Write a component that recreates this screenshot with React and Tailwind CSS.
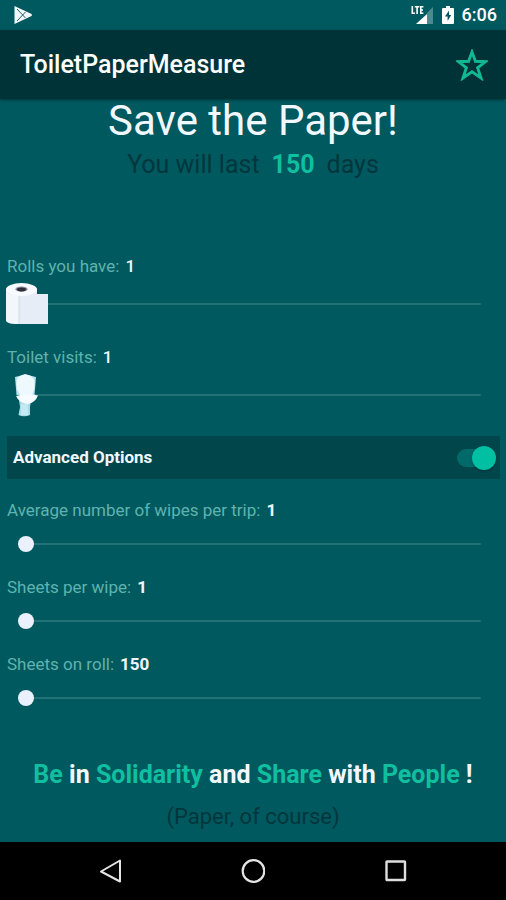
import { useState } from "react";

function PlayStoreIcon() {
  return (
    <svg viewBox="0 0 20 20" className="h-5 w-5" aria-hidden="true">
      <path d="M1.5 1 L18.5 9 Q19.5 10 18.5 11 L1.5 19 Z" fill="#f2f8f9" />
      <path d="M4 4 L12.5 13 M4 16 L12.5 7" stroke="#0b4f55" strokeWidth="0.9" fill="none" />
    </svg>
  );
}

function SignalIcon() {
  return (
    <svg viewBox="0 0 23 20" className="h-5 w-[23px]" aria-hidden="true">
      <path d="M22 2 V19 H16 V8 Z" fill="#4b8b90" />
      <path d="M16 9 V19 H5 Z" fill="#ffffff" />
      <g stroke="#ffffff" strokeWidth="1.6" fill="none">
        <path d="M1.3 1 V8.2 H4" />
        <path d="M3.8 1.8 H8.4 M6.1 1.8 V9" />
        <path d="M12.4 1.8 H9.8 V8.2 H12.4 M9.8 5 H12" />
      </g>
    </svg>
  );
}

function BatteryIcon() {
  return (
    <svg viewBox="0 0 12 20" className="h-5 w-3" aria-hidden="true">
      <path d="M4 1 H8 V3 H11 Q12 3 12 4 V18 Q12 19 11 19 H1 Q0 19 0 18 V4 Q0 3 1 3 H4 Z" fill="#ffffff" />
      <path d="M7 5.5 L3 11.5 H5.6 V16 L9.2 10 H7 Z" fill="#00575d" />
    </svg>
  );
}

function StarIcon() {
  return (
    <svg viewBox="0 0 32 32" className="h-8 w-8" aria-hidden="true">
      <path
        d="M16 3 L19.4 12.3 L29.5 12.7 L21.6 18.8 L25 29 L16 22.8 L7 29 L10.4 18.8 L2.5 12.7 L12.6 12.3 Z"
        fill="none"
        stroke="#12b892"
        strokeWidth="2.9"
      />
    </svg>
  );
}

function RollIcon() {
  return (
    <svg viewBox="0 0 44 44" className="h-11 w-11" aria-hidden="true">
      <path d="M1 8 C1 0 32 0 32 8 V12 H43 V42 H14 C7 42 1 41 1 38 Z" fill="#e6edf7" />
      <path d="M1 8 V38 C1 41 7 42 14 42 V14 C7 13 1 12 1 8 Z" fill="#f3f7fc" />
      <path d="M14 14 V42" stroke="#d3dce8" strokeWidth="1" />
      <ellipse cx="16.5" cy="7.5" rx="15.5" ry="6.5" fill="#f8fbff" />
      <ellipse cx="16.5" cy="7.2" rx="6" ry="2.7" fill="#8c8c98" />
      <ellipse cx="16.5" cy="7.4" rx="4.5" ry="1.8" fill="#30303c" />
    </svg>
  );
}

function ToiletIcon() {
  return (
    <svg viewBox="0 0 44 44" className="h-11 w-11" aria-hidden="true">
      <path d="M10 4 Q15 3 20 1 Q26 3 31 4 L29.5 22 H11.5 Z" fill="#b5e2ee" />
      <path d="M14 27 H26 L25 34 V42 Q19 44.5 13.5 42 L15 34 Z" fill="#a9dbe7" />
      <path d="M16 31 H23 V42 H16 Z" fill="#c3e9f2" />
      <path d="M11.5 9 Q12 2 20.5 1.5 Q29 2 29.5 9 Q30 16 27 22 H15 Q11 16 11.5 9 Z" fill="#eef9fe" />
      <path d="M11 23 Q21 20 33 22.5 Q30 30 23 31 Q14 30 11 23 Z" fill="#f6fcff" />
    </svg>
  );
}

const trackClass =
  "block h-4 w-full cursor-pointer appearance-none bg-transparent outline-none [&::-webkit-slider-runnable-track]:h-[2px] [&::-webkit-slider-runnable-track]:rounded-full [&::-webkit-slider-runnable-track]:bg-[#217378] [&::-webkit-slider-thumb]:-mt-[7px] [&::-webkit-slider-thumb]:h-4 [&::-webkit-slider-thumb]:w-4 [&::-webkit-slider-thumb]:appearance-none [&::-webkit-slider-thumb]:rounded-full";

function Slider({ id, label, value, min, max, onChange, picture, strong }) {
  const ratio = (value - min) / (max - min);
  return (
    <div>
      <label htmlFor={id} className="flex gap-1.5 px-[7px] text-[17px] leading-6 text-[#5fb3ae]">
        <span>{label}</span>
        <span className={strong ? "font-bold text-[#f0f6ff]" : "font-medium text-[#f0f6ff]"}>{value}</span>
      </label>
      <div className={picture ? "flex h-[52px] items-center pl-[18px] pr-[25px]" : "flex h-11 items-center pl-[18px] pr-[25px]"}>
        <div className="relative flex-1">
          <input
            id={id}
            type="range"
            min={min}
            max={max}
            value={value}
            onChange={(e) => onChange(Number(e.target.value))}
            className={
              picture
                ? `${trackClass} [&::-webkit-slider-thumb]:bg-transparent`
                : `${trackClass} [&::-webkit-slider-thumb]:bg-[#eaf1fc]`
            }
          />
          {picture && (
            <span
              className="pointer-events-none absolute -top-3.5 -ml-[13px]"
              style={{ left: `calc((100% - 16px) * ${ratio})` }}
            >
              {picture}
            </span>
          )}
        </div>
      </div>
    </div>
  );
}

export default function App() {
  const [rolls, setRolls] = useState(1);
  const [visits, setVisits] = useState(1);
  const [wipes, setWipes] = useState(1);
  const [sheets, setSheets] = useState(1);
  const [perRoll, setPerRoll] = useState(150);
  const [advanced, setAdvanced] = useState(true);
  const days = Math.floor((rolls * perRoll) / (visits * wipes * sheets));

  return (
    <div className="flex min-h-screen flex-col bg-[#00595f] font-['Roboto',sans-serif]">
      <div className="flex h-[30px] items-center justify-between bg-[#00595f] pl-[13px] pr-[9px]">
        <PlayStoreIcon />
        <div className="flex items-center gap-2">
          <SignalIcon />
          <BatteryIcon />
          <span className="text-lg font-medium leading-5 text-white">6:06</span>
        </div>
      </div>

      <header className="flex h-[69px] items-center justify-between bg-[#003337] pl-5 pr-[18px] shadow-[0_1px_3px_rgba(0,0,0,0.4)]">
        <h1 className="text-[25px] font-medium leading-8 text-white">ToiletPaperMeasure</h1>
        <button type="button" aria-label="Favourite" className="cursor-pointer">
          <StarIcon />
        </button>
      </header>

      <main className="flex flex-1 flex-col">
        <h2 className="text-center text-[42px] leading-[44px] text-[#f2f8ff]">Save the Paper!</h2>
        <p className="mt-1.5 flex justify-center gap-3 text-[25px] leading-8 text-[#00363c]">
          <span>You will last</span>
          <strong className="font-bold text-[#0fbf9f]">{days}</strong>
          <span>days</span>
        </p>

        <section className="mt-[73px] flex flex-col gap-[15px]">
          <Slider id="rolls" label="Rolls you have:" value={rolls} min={1} max={50} onChange={setRolls} picture={<RollIcon />} />
          <Slider id="visits" label="Toilet visits:" value={visits} min={1} max={20} onChange={setVisits} picture={<ToiletIcon />} />
        </section>

        <label className="ml-[7px] mr-1.5 mt-[15px] flex h-[43px] cursor-pointer items-center justify-between bg-[#00464b] pl-1.5 pr-1">
          <span className="text-[17px] font-bold text-[#f2f8ff]">Advanced Options</span>
          <span className="relative flex h-6 w-[39px] items-center">
            <input
              type="checkbox"
              role="switch"
              checked={advanced}
              onChange={(e) => setAdvanced(e.target.checked)}
              className="peer h-[18px] w-[39px] cursor-pointer appearance-none rounded-full bg-[#00696a]"
            />
            <span className="pointer-events-none absolute left-0 h-6 w-6 rounded-full bg-[#9fb8ba] shadow-[0_1px_2px_rgba(0,0,0,0.3)] peer-checked:left-[15px] peer-checked:bg-[#00bfa2]" />
          </span>
        </label>

        {advanced && (
          <section className="mt-[19px] flex flex-col gap-[9px]">
            <Slider id="wipes" label="Average number of wipes per trip:" value={wipes} min={1} max={20} onChange={setWipes} strong />
            <Slider id="sheets" label="Sheets per wipe:" value={sheets} min={1} max={20} onChange={setSheets} strong />
            <Slider id="per-roll" label="Sheets on roll:" value={perRoll} min={150} max={500} onChange={setPerRoll} strong />
          </section>
        )}

        <footer className="mt-auto pb-[9px] text-center">
          <p className="text-[25px] font-bold leading-8 text-[#f2f8ff]">
            <span className="text-[#0fbf9f]">Be</span> in <span className="text-[#0fbf9f]">Solidarity</span> and{" "}
            <span className="text-[#0fbf9f]">Share</span> with <span className="text-[#0fbf9f]">People</span> !
          </p>
          <p className="mt-2.5 text-[22px] leading-8 text-[#00363c]">(Paper, of course)</p>
        </footer>
      </main>

      <nav className="flex h-[58px] items-center justify-center gap-[118px] bg-black">
        <button type="button" aria-label="Back" className="cursor-pointer">
          <svg viewBox="0 0 24 24" className="h-6 w-6" aria-hidden="true">
            <path d="M21 1.5 V22.5 L2 12.5 Z" fill="none" stroke="#e4e4e4" strokeWidth="2" strokeLinejoin="round" />
          </svg>
        </button>
        <button type="button" aria-label="Home" className="cursor-pointer">
          <svg viewBox="0 0 24 24" className="h-6 w-6" aria-hidden="true">
            <circle cx="12.5" cy="12" r="10.8" fill="none" stroke="#e4e4e4" strokeWidth="2.2" />
          </svg>
        </button>
        <button type="button" aria-label="Recent apps" className="cursor-pointer">
          <svg viewBox="0 0 24 24" className="h-6 w-6" aria-hidden="true">
            <rect x="3.5" y="2.5" width="18.5" height="18.5" rx="0.5" fill="none" stroke="#dedede" strokeWidth="2.4" />
          </svg>
        </button>
      </nav>
    </div>
  );
}
